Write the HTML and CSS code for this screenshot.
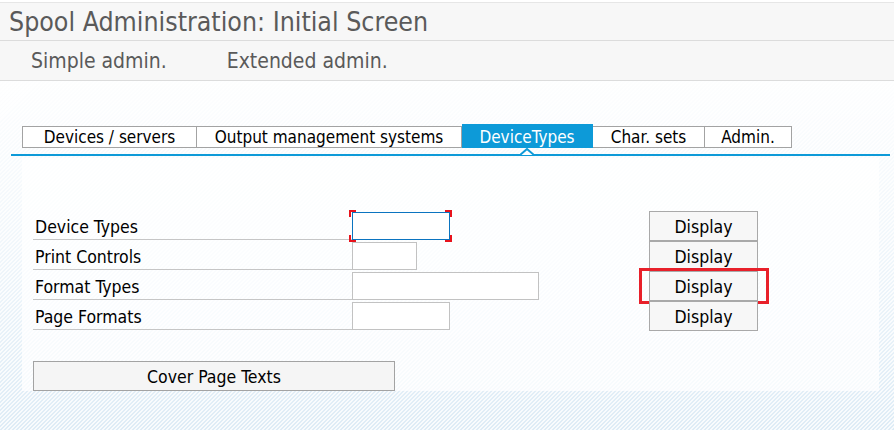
FILE: index.html
```html
<!DOCTYPE html>
<html lang="en">
<head>
<meta charset="utf-8">
<title>Spool Administration: Initial Screen</title>
<link rel="stylesheet" href="styles.css">
</head>
<body>
<header class="titlebar">
  <h1 class="title">Spool Administration: Initial Screen</h1>
</header>
<nav class="menubar">
  <span class="menu-item">Simple admin.</span>
  <span class="menu-item">Extended admin.</span>
</nav>
<main class="canvas">
  <div class="tabbar">
    <ul class="tabs">
      <li class="tab tab-devices">Devices / servers</li>
      <li class="tab tab-oms">Output management systems</li>
      <li class="tab tab-selected tab-devtypes">DeviceTypes<svg class="caret" width="14" height="7" viewBox="0 0 14 7"><polyline points="0,7 7,1 14,7" fill="#fff" stroke="#0d9ad8" stroke-width="2"/></svg></li>
      <li class="tab tab-charsets">Char. sets</li>
      <li class="tab tab-admin">Admin.</li>
    </ul>
  </div>
  <section class="panel">
    <div class="form">
      <div class="label">Device Types</div>
      <div class="field-cell"><span class="field field-focus field-md"><span class="focus-marks"></span></span></div>
      <div class="btn-cell"><button class="btn">Display</button></div>

      <div class="label">Print Controls</div>
      <div class="field-cell"><span class="field field-sm"></span></div>
      <div class="btn-cell"><button class="btn">Display</button></div>

      <div class="label">Format Types</div>
      <div class="field-cell"><span class="field field-lg"></span></div>
      <div class="btn-cell"><button class="btn">Display</button><span class="highlight"></span></div>

      <div class="label">Page Formats</div>
      <div class="field-cell"><span class="field field-md"></span></div>
      <div class="btn-cell"><button class="btn">Display</button></div>
    </div>
    <button class="btn btn-wide">Cover Page Texts</button>
  </section>
</main>
</body>
</html>
```

FILE: styles.css
```css
* { box-sizing: border-box; }

html, body {
  margin: 0;
  padding: 0;
  background: #ffffff;
}

body {
  font-family: "DejaVu Sans Condensed", "DejaVu Sans", sans-serif;
  font-stretch: condensed;
  color: #000;
  width: 894px;
  height: 430px;
  overflow: hidden;
}

.titlebar {
  margin-top: 2px;
  height: 39px;
  background: #f7f7f7;
  border-top: 1px solid #e6e6e6;
  border-bottom: 1px solid #dcdcdc;
}

.title {
  margin: 0;
  padding-left: 9px;
  font-size: 26.5px;
  font-weight: normal;
  line-height: 38px;
  color: #5a5a5a;
  white-space: nowrap;
}

.menubar {
  display: flex;
  gap: 60px;
  height: 40px;
  padding-left: 31px;
  background: #f7f7f7;
  border-bottom: 1px solid #dcdcdc;
}

.menu-item {
  font-size: 21px;
  line-height: 40px;
  color: #5a5a5a;
  white-space: nowrap;
}

.canvas {
  height: 349px;
  padding-top: 43px;
  background:
    linear-gradient(to bottom, rgba(255,255,255,0.95) 0%, rgba(255,255,255,0.6) 45%, rgba(255,255,255,0) 100%),
    repeating-linear-gradient(135deg, #deecf6 0 1.4px, #f8fbfd 1.4px 2.83px);
}

.tabbar {
  margin-left: 11px;
  width: 879px;
  padding-bottom: 6px;
  border-bottom: 2px solid #0d9ad8;
}

.tabs {
  display: flex;
  align-items: flex-end;
  list-style: none;
  margin: 0 0 0 11px;
  padding: 0;
}

.tab {
  position: relative;
  height: 22px;
  border: 1px solid #a3a3a3;
  border-left: none;
  background: #ffffff;
  font-size: 17px;
  line-height: 20px;
  text-align: center;
  white-space: nowrap;
}

.tab-devices { width: 175px; border-left: 1px solid #a3a3a3; }
.tab-oms { width: 265px; }
.tab-devtypes { width: 131px; }
.tab-charsets { width: 112px; border-left: none; }
.tab-admin { width: 87px; }

.tab-selected {
  height: 24px;
  background: #0d9ad8;
  border-color: #0d9ad8;
  color: #ffffff;
  line-height: 24px;
}

.caret {
  position: absolute;
  left: 50%;
  top: 100%;
  margin-top: 1px;
  transform: translateX(-50%);
  display: block;
}

.panel {
  margin: 2px 0 0 22px;
  width: 857px;
  height: 233px;
  padding: 52px 0 0 11px;
  background: rgba(255,255,255,0.72);
}

.form {
  display: grid;
  grid-template-columns: 319px 297px 109px;
  grid-auto-rows: 30px;
}

.label {
  height: 30px;
  padding: 5px 0 0 2px;
  border-bottom: 1px solid #c6c6c6;
  font-size: 17.5px;
  line-height: 25px;
  white-space: nowrap;
}

.field-cell {
  padding-top: 2px;
}

.field {
  position: relative;
  display: block;
  height: 28px;
  background: #ffffff;
  border: 1px solid #c2c2c2;
}

.field-sm { width: 65px; }
.field-md { width: 98px; }
.field-lg { width: 187px; }

.field-focus {
  border-color: #0b74c0;
}

.focus-marks {
  position: absolute;
  top: -3px;
  left: -4px;
  right: -3px;
  bottom: -3px;
  background:
    linear-gradient(#e8131c, #e8131c) left top / 7px 2px no-repeat,
    linear-gradient(#e8131c, #e8131c) left top / 2px 7px no-repeat,
    linear-gradient(#e8131c, #e8131c) right top / 7px 2px no-repeat,
    linear-gradient(#e8131c, #e8131c) right top / 2px 7px no-repeat,
    linear-gradient(#e8131c, #e8131c) left bottom / 7px 2px no-repeat,
    linear-gradient(#e8131c, #e8131c) left bottom / 2px 7px no-repeat,
    linear-gradient(#e8131c, #e8131c) right bottom / 7px 2px no-repeat,
    linear-gradient(#e8131c, #e8131c) right bottom / 2px 7px no-repeat;
}

.btn-cell {
  position: relative;
  padding-top: 1px;
}

.btn {
  display: block;
  width: 109px;
  height: 30px;
  margin: 0;
  padding: 1px 0 0;
  background: #f7f7f7;
  border: 1px solid #a9a9a9;
  border-radius: 0;
  font-family: inherit;
  font-stretch: condensed;
  font-size: 17.5px;
  color: #000;
  text-align: center;
}

.highlight {
  position: absolute;
  top: -2px;
  left: -10px;
  width: 130px;
  height: 36px;
  border: 3px solid #e8202a;
}

.btn-wide {
  width: 362px;
  margin-top: 31px;
  background: #f5f5f5;
  border-color: #a3a3a3;
}
```
